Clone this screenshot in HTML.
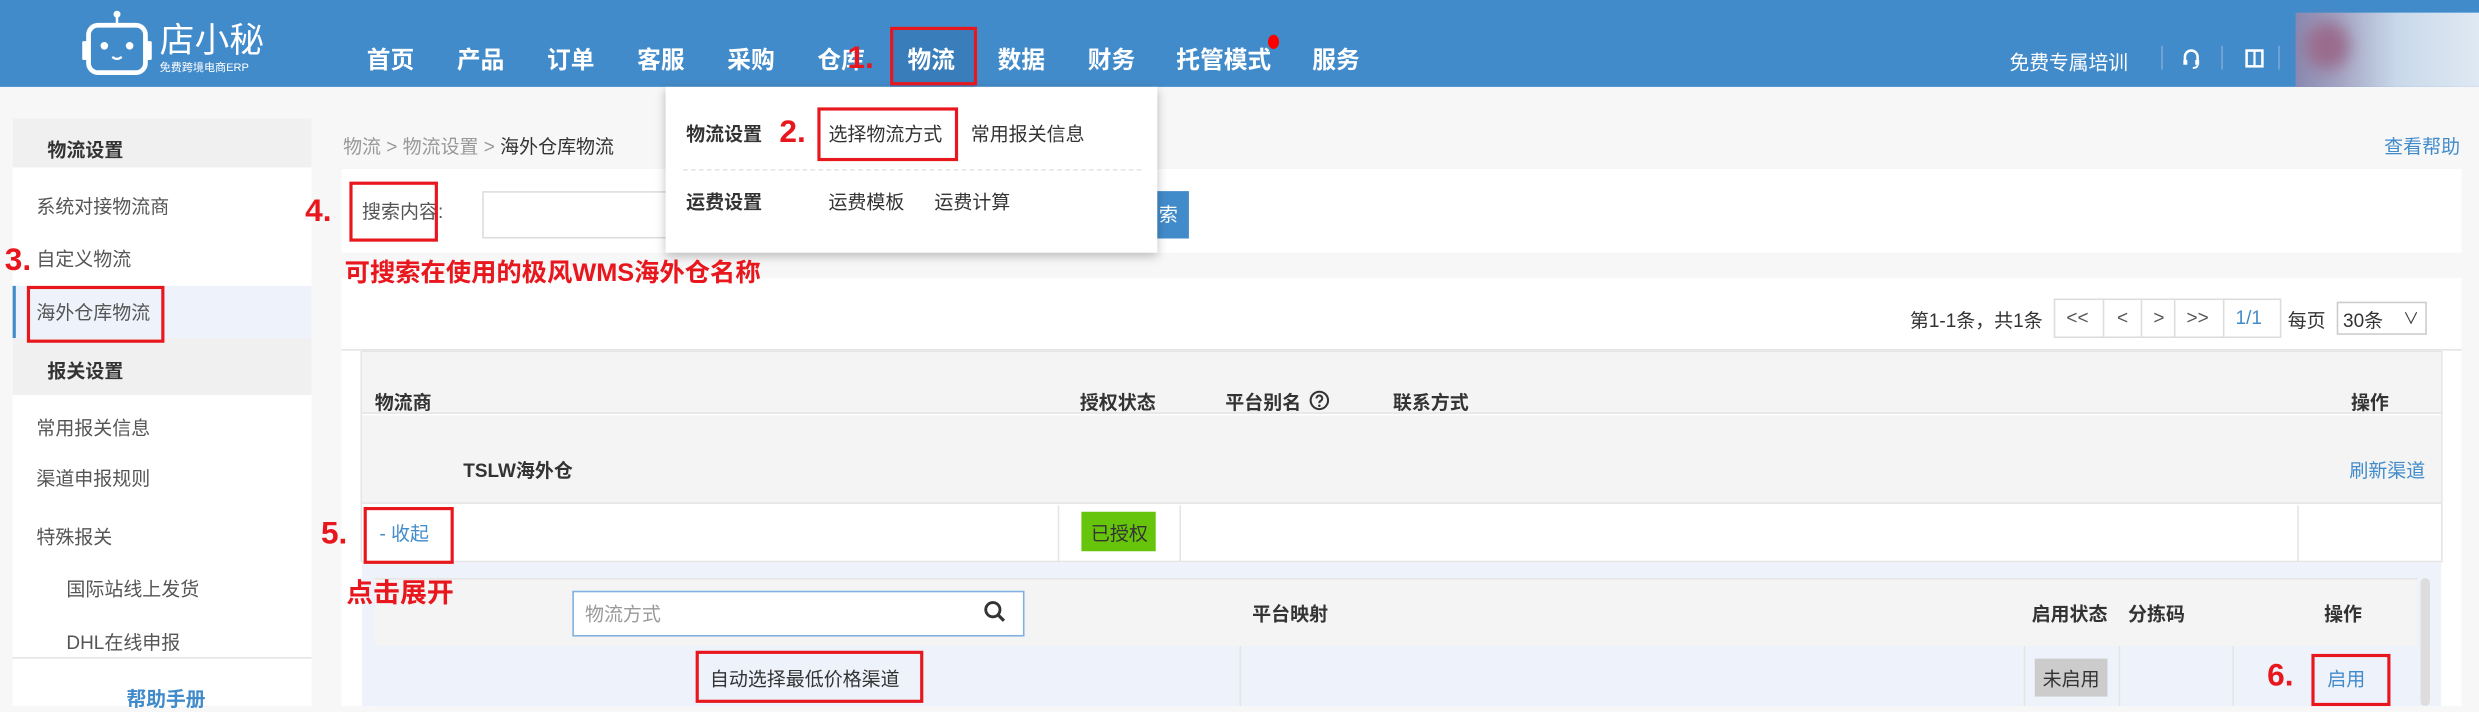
<!DOCTYPE html>
<html><head><meta charset="utf-8"><style>
*{margin:0;padding:0;box-sizing:border-box}
html,body{width:2479px;height:706px;overflow:hidden;background:#f7f7f7}
#s{position:absolute;left:0;top:0;width:1568px;height:447px;transform:scale(1.581,1.5795);transform-origin:0 0;font-family:"Liberation Sans","Noto Sans CJK SC",sans-serif;font-size:12px;color:#333}
.a{position:absolute;white-space:nowrap}
.hd{left:0;top:0;width:1568px;height:55px;background:#428bca}
.nav{top:27px;color:#fff;font-size:15px;font-weight:bold}
.w{color:#fff}
.b{color:#428bca}
.rb{position:absolute;border:2px solid #e8161d}
.rn{position:absolute;color:#e8161d;font-weight:bold;font-size:20px;line-height:20px}
.box{background:#fff}
.sb{left:8px;top:75px;width:189px;height:372px;background:#fff}
.si{left:23px;font-size:12px;color:#555}
.th{font-weight:bold;font-size:12px;color:#333}
</style></head><body><div id="s">
<div class="a hd"></div>
<svg class="a" style="left:50px;top:6px" width="48" height="44" viewBox="0 0 48 44"><circle cx="24" cy="3" r="2.2" fill="#fff"/><line x1="24" y1="4" x2="24" y2="10" stroke="#fff" stroke-width="1.6"/><rect x="6" y="10" width="36" height="30" rx="6" fill="none" stroke="#fff" stroke-width="3"/><rect x="2" y="20" width="4" height="12" rx="1" fill="#fff"/><rect x="42" y="20" width="4" height="12" rx="1" fill="#fff"/><circle cx="16" cy="23" r="2.4" fill="#fff"/><circle cx="32" cy="23" r="2.4" fill="#fff"/><path d="M21 30q3 2.5 6 0" stroke="#fff" stroke-width="1.4" fill="none"/></svg>
<div class="a w" style="left:101px;top:13px;font-size:22px;line-height:26px">店小秘</div>
<div class="a w" style="left:101px;top:39px;font-size:7px;line-height:9px">免费跨境电商ERP</div>
<div class="a nav" style="left:232px;top:27px">首页</div>
<div class="a nav" style="left:289px;top:27px">产品</div>
<div class="a nav" style="left:346px;top:27px">订单</div>
<div class="a nav" style="left:403px;top:27px">客服</div>
<div class="a nav" style="left:460px;top:27px">采购</div>
<div class="a nav" style="left:517px;top:27px">仓库</div>
<div class="a" style="left:563px;top:17px;width:54px;height:38px;background:#3a7dbb"></div>
<div class="a nav" style="left:574px;top:27px">物流</div>
<div class="a nav" style="left:631px;top:27px">数据</div>
<div class="a nav" style="left:688px;top:27px">财务</div>
<div class="a nav" style="left:744px;top:27px">托管模式</div>
<div class="a" style="left:802px;top:22px;width:7px;height:9px;border-radius:50%;background:#f00"></div>
<div class="a nav" style="left:830px;top:27px">服务</div>
<div class="a w" style="left:1271px;top:29px;font-size:12.5px">免费专属培训</div>
<div class="a" style="left:1367px;top:29px;width:1px;height:15px;background:#7aa9d6"></div>
<svg class="a" style="left:1380px;top:30px" width="12" height="14" viewBox="0 0 12 14"><path d="M2 9V6a4 4 0 0 1 8 0v3" stroke="#fff" stroke-width="1.6" fill="none"/><rect x="1" y="8" width="2.5" height="3" fill="#fff"/><rect x="8.5" y="8" width="2.5" height="3" fill="#fff"/><path d="M10 11q0 2-3 2" stroke="#fff" stroke-width="1.2" fill="none"/></svg>
<div class="a" style="left:1405px;top:29px;width:1px;height:15px;background:#7aa9d6"></div>
<svg class="a" style="left:1420px;top:31px" width="12" height="12" viewBox="0 0 12 12"><rect x="1" y="1" width="10" height="10" fill="none" stroke="#fff" stroke-width="1.6"/><line x1="6" y1="1" x2="6" y2="11" stroke="#fff" stroke-width="1.4"/></svg>
<div class="a" style="left:1441px;top:29px;width:1px;height:15px;background:#7aa9d6"></div>
<div class="a" style="left:1452px;top:8px;width:116px;height:47px;background:linear-gradient(90deg,#8a88b0 0%,#a5a6c4 25%,#c9d8ea 55%,#dfe9f3 100%)"></div>
<div class="a" style="left:1458px;top:14px;width:28px;height:30px;border-radius:50%;background:#9a6b8c;filter:blur(5px)"></div>

<div class="a sb"></div>
<div class="a" style="left:8px;top:75px;width:189px;height:31px;background:#f0f0f0"></div>
<div class="a th" style="left:30px;top:86px">物流设置</div>
<div class="a si" style="top:122px">系统对接物流商</div>
<div class="a si" style="top:155px">自定义物流</div>
<div class="a" style="left:8px;top:181px;width:189px;height:33px;background:#eef2fa;border-left:2px solid #428bca"></div>
<div class="a si b" style="top:189px">海外仓库物流</div>
<div class="a" style="left:8px;top:214px;width:189px;height:36px;background:#f0f0f0"></div>
<div class="a th" style="left:30px;top:226px">报关设置</div>
<div class="a si" style="top:262px">常用报关信息</div>
<div class="a si" style="top:294px">渠道申报规则</div>
<div class="a si" style="top:331px">特殊报关</div>
<div class="a si" style="left:42px;top:364px">国际站线上发货</div>
<div class="a si" style="left:42px;top:398px">DHL在线申报</div>
<div class="a" style="left:8px;top:416px;width:189px;height:1px;background:#e5e5e5"></div>
<div class="a b" style="left:80px;top:432px;font-weight:bold;font-size:12.5px">帮助手册</div>

<div class="a" style="left:217px;top:84px;color:#999">物流 &gt; 物流设置 &gt; <span style="color:#333">海外仓库物流</span></div>
<div class="a b" style="left:1508px;top:84px">查看帮助</div>

<div class="a box" style="left:216px;top:107px;width:1341px;height:53px"></div>
<div class="a" style="left:229px;top:125px;color:#555">搜索内容:</div>
<div class="a" style="left:305px;top:121px;width:420px;height:30px;border:1px solid #ddd"></div>
<div class="a" style="left:712px;top:121px;width:40px;height:30px;background:#428bca"></div>
<div class="a w" style="left:733px;top:127px">索</div>

<div class="a box" style="left:216px;top:176px;width:1341px;height:271px"></div>
<div class="a" style="left:1208px;top:194px">第1-1条，共1条</div>
<div class="a" style="left:1299px;top:189px;width:144px;height:25px;border:1px solid #ddd;background:#fff"></div>
<div class="a" style="left:1307px;top:194px;color:#555">&lt;&lt;</div>
<div class="a" style="left:1339px;top:194px;color:#555">&lt;</div>
<div class="a" style="left:1362px;top:194px;color:#555">&gt;</div>
<div class="a" style="left:1383px;top:194px;color:#555">&gt;&gt;</div>
<div class="a b" style="left:1414px;top:194px">1/1</div>
<div class="a" style="left:1330px;top:190px;width:1px;height:23px;background:#ddd"></div>
<div class="a" style="left:1354px;top:190px;width:1px;height:23px;background:#ddd"></div>
<div class="a" style="left:1375px;top:190px;width:1px;height:23px;background:#ddd"></div>
<div class="a" style="left:1406px;top:190px;width:1px;height:23px;background:#ddd"></div>
<div class="a" style="left:1447px;top:194px">每页</div>
<div class="a" style="left:1478px;top:191px;width:57px;height:21px;border:1px solid #ccc;background:#fff"></div>
<div class="a" style="left:1482px;top:194px">30条</div>
<div class="a" style="left:1520px;top:193px;font-size:10px">∨</div>
<div class="a" style="left:216px;top:221px;width:1341px;height:1px;background:#e5e5e5"></div>

<div class="a" style="left:228px;top:222px;width:1317px;height:134px;border:1px solid #e5e5e5"></div>
<div class="a" style="left:229px;top:223px;width:1315px;height:39px;background:#f4f4f4;border-bottom:1px solid #e5e5e5"></div>
<div class="a th" style="left:237px;top:246px">物流商</div>
<div class="a th" style="left:683px;top:246px">授权状态</div>
<div class="a th" style="left:775px;top:246px">平台别名</div>
<svg class="a" style="left:828px;top:247px" width="13" height="13" viewBox="0 0 13 13"><circle cx="6.5" cy="6.5" r="5.5" fill="none" stroke="#333" stroke-width="1.3"/><path d="M4.7 5.2a1.8 1.8 0 1 1 2.6 1.6c-.6.3-.8.7-.8 1.4" fill="none" stroke="#333" stroke-width="1.3"/><circle cx="6.5" cy="9.9" r=".8" fill="#333"/></svg>
<div class="a th" style="left:881px;top:246px">联系方式</div>
<div class="a th" style="left:1487px;top:246px">操作</div>
<div class="a" style="left:229px;top:263px;width:1315px;height:56px;background:#f4f4f4;border-bottom:1px solid #e5e5e5"></div>
<div class="a th" style="left:293px;top:289px">TSLW海外仓</div>
<div class="a b" style="left:1486px;top:289px">刷新渠道</div>
<div class="a" style="left:669px;top:320px;width:1px;height:36px;background:#e5e5e5"></div>
<div class="a" style="left:746px;top:320px;width:1px;height:36px;background:#e5e5e5"></div>
<div class="a" style="left:1453px;top:320px;width:1px;height:36px;background:#e5e5e5"></div>
<div class="a b" style="left:240px;top:329px">- 收起</div>
<div class="a" style="left:684px;top:324px;width:47px;height:25px;background:#66c50a"></div>
<div class="a" style="left:690px;top:329px;color:#333">已授权</div>

<div class="a" style="left:229px;top:356px;width:1315px;height:91px;background:#eef2fa"></div>
<div class="a" style="left:237px;top:366px;width:1292px;height:43px;background:#f4f4f4;border-top:1px solid #e5e5e5"></div>
<div class="a" style="left:362px;top:374px;width:286px;height:29px;border:1px solid #7fb0e0;background:#fff"></div>
<div class="a" style="left:370px;top:380px;color:#999">物流方式</div>
<svg class="a" style="left:622px;top:380px" width="14" height="14" viewBox="0 0 14 14"><circle cx="6" cy="6" r="4.5" stroke="#333" stroke-width="1.8" fill="none"/><line x1="9.3" y1="9.3" x2="13" y2="13" stroke="#333" stroke-width="2"/></svg>
<div class="a th" style="left:792px;top:380px">平台映射</div>
<div class="a th" style="left:1285px;top:380px">启用状态</div>
<div class="a th" style="left:1346px;top:380px">分拣码</div>
<div class="a th" style="left:1470px;top:380px">操作</div>
<div class="a" style="left:237px;top:409px;width:1292px;height:38px;background:#eef2fa"></div>
<div class="a" style="left:784px;top:409px;width:1px;height:38px;background:#e5e5e5"></div>
<div class="a" style="left:1280px;top:409px;width:1px;height:38px;background:#e5e5e5"></div>
<div class="a" style="left:1340px;top:409px;width:1px;height:38px;background:#e5e5e5"></div>
<div class="a" style="left:1412px;top:409px;width:1px;height:38px;background:#e5e5e5"></div>
<div class="a" style="left:449px;top:421px">自动选择最低价格渠道</div>
<div class="a" style="left:1287px;top:417px;width:46px;height:24px;background:#ccc"></div>
<div class="a" style="left:1292px;top:421px">未启用</div>
<div class="a b" style="left:1472px;top:421px">启用</div>
<div class="a" style="left:1531px;top:366px;width:6px;height:81px;background:#ddd;border-radius:3px"></div>

<div class="a box" style="left:421px;top:55px;width:311px;height:105px;box-shadow:0 2px 6px rgba(0,0,0,.25)"></div>
<div class="a th" style="left:434px;top:76px">物流设置</div>
<div class="a" style="left:524px;top:76px">选择物流方式</div>
<div class="a" style="left:614px;top:76px">常用报关信息</div>
<div class="a" style="left:432px;top:107px;width:290px;border-top:1px dashed #e5e5e5"></div>
<div class="a th" style="left:434px;top:119px">运费设置</div>
<div class="a" style="left:524px;top:119px">运费模板</div>
<div class="a" style="left:591px;top:119px">运费计算</div>

<div class="rb" style="left:563px;top:17px;width:55px;height:37px"></div>
<div class="rn" style="left:536px;top:27px">1.</div>
<div class="rb" style="left:517px;top:68px;width:89px;height:34px"></div>
<div class="rn" style="left:493px;top:74px">2.</div>
<div class="rb" style="left:17px;top:181px;width:87px;height:36px"></div>
<div class="rn" style="left:3px;top:155px">3.</div>
<div class="rb" style="left:221px;top:115px;width:56px;height:38px"></div>
<div class="rn" style="left:193px;top:124px">4.</div>
<div class="a" style="left:218px;top:159px;color:#e8161d;font-weight:bold;font-size:16px">可搜索在使用的极风WMS海外仓名称</div>
<div class="rb" style="left:230px;top:321px;width:57px;height:36px"></div>
<div class="rn" style="left:203px;top:328px">5.</div>
<div class="a" style="left:219px;top:361px;color:#e8161d;font-weight:bold;font-size:17px">点击展开</div>
<div class="rb" style="left:440px;top:412px;width:144px;height:33px"></div>
<div class="rb" style="left:1462px;top:414px;width:50px;height:33px"></div>
<div class="rn" style="left:1434px;top:418px">6.</div>
</div></body></html>
